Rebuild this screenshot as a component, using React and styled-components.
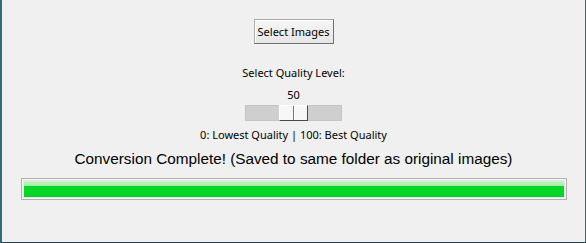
import React from "react";
import styled, { createGlobalStyle } from "styled-components";

const GlobalStyle = createGlobalStyle`
  html, body {
    margin: 0;
    padding: 0;
    background: #f0f0f0;
  }
`;

const Window = styled.div`
  width: 586px;
  height: 243px;
  box-sizing: border-box;
  background: #f0f0f0;
  border-left: 2px solid #2f6b78;
  border-right: 1px solid #2f6b78;
  border-bottom: 1px solid #2a3f4c;
  display: flex;
  flex-direction: column;
  align-items: center;
  padding-top: 19px;
  font-family: "Noto Sans", "Open Sans", sans-serif;
  font-size: 11px;
  color: #000;
`;

const Button = styled.button`
  height: 25px;
  width: 80px;
  padding: 0;
  box-sizing: border-box;
  font-family: inherit;
  font-size: 11px;
  color: #000;
  background: linear-gradient(#f6f6f6, #e6e6e6);
  border: 1px solid #ababab;
  border-right-color: #707070;
  border-bottom-color: #707070;
  box-shadow: inset 1px 1px 0 #fff;
  border-radius: 0;
`;

const Label = styled.div`
  margin-top: ${(p) => p.$top || 0}px;
  line-height: 16px;
`;

const Trough = styled.div`
  width: 97px;
  height: 16px;
  margin-top: 2px;
  box-sizing: border-box;
  background: #cfcfcf;
  border: 1px solid #c4c4c4;
  position: relative;
`;

const Thumb = styled.div`
  position: absolute;
  top: -1px;
  left: ${(p) => p.$pos}px;
  width: 29px;
  height: 16px;
  box-sizing: border-box;
  background: #f7f7f7;
  border: 1px solid #ffffff;
  border-right-color: #4a4a4a;
  border-bottom-color: #4a4a4a;
  &::after {
    content: "";
    position: absolute;
    left: 13px;
    top: 0;
    bottom: 0;
    width: 1px;
    background: #777;
    box-shadow: 1px 0 0 #fff;
  }
`;

const Status = styled.div`
  margin-top: 6px;
  font-family: "Liberation Sans", Arial, sans-serif;
  font-size: 15.3px;
  line-height: 20px;
`;

const Progress = styled.div`
  margin-top: 9px;
  width: 546px;
  height: 22px;
  box-sizing: border-box;
  border: 1px solid #b0b0b0;
  background: #e6e6e6;
  padding: 2px;
  box-shadow: inset 0 0 0 1px #f4f4f4;
`;

const Fill = styled.div`
  height: 100%;
  background: linear-gradient(
    #c8f5c8 0%,
    #a4eaa4 30%,
    #06d626 32%,
    #06d626 88%,
    #10c030 100%
  );
`;

export default function App() {
  return (
    <>
      <GlobalStyle />
      <Window>
        <Button>Select Images</Button>
        <Label $top={21}>Select Quality Level:</Label>
        <Label $top={6}>50</Label>
        <Trough>
          <Thumb $pos={33} />
        </Trough>
        <Label $top={6}>0: Lowest Quality | 100: Best Quality</Label>
        <Status>Conversion Complete! (Saved to same folder as original images)</Status>
        <Progress>
          <Fill style={{ width: "100%" }} />
        </Progress>
      </Window>
    </>
  );
}
